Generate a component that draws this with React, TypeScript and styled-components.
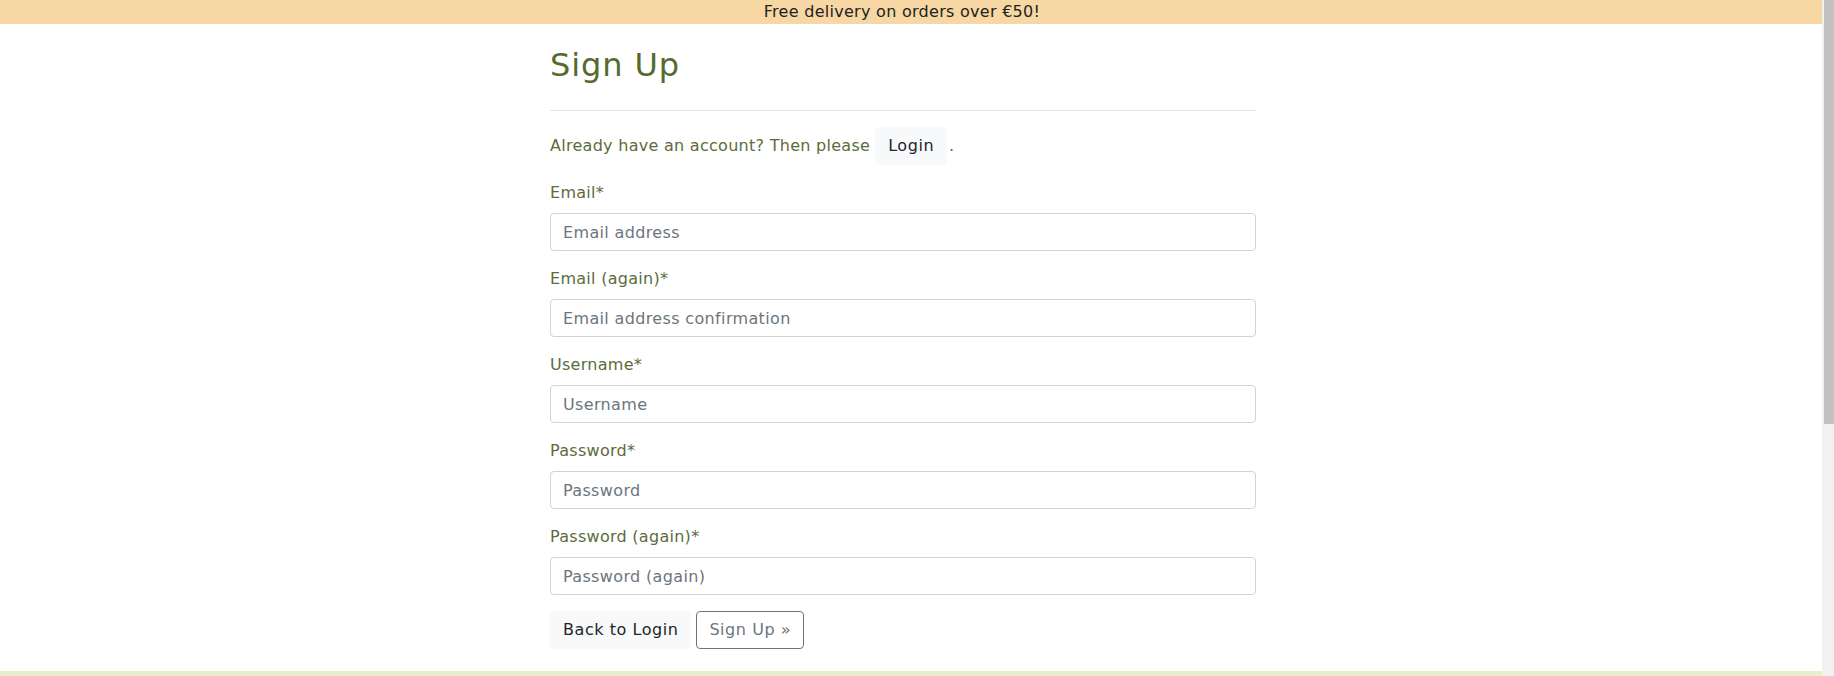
import React from "react";
import styled, { createGlobalStyle } from "styled-components";

const GlobalStyle = createGlobalStyle`
  html, body { margin: 0; padding: 0; overflow: hidden; }
  body {
    background: #ffffff;
    color: #212529;
    font-family: "DejaVu Sans", "Liberation Sans", sans-serif;
    font-size: 16px;
    line-height: 24px;
    letter-spacing: 0.28px;
  }
  * { box-sizing: border-box; }
`;

const Frame = styled.div`
  display: grid;
  grid-template-columns: minmax(0, 1fr) 12px;
  height: 676px;
  overflow: hidden;
`;

const Page = styled.div`
  display: flex;
  flex-direction: column;
  min-height: 1078px;
`;

const ScrollTrack = styled.div`
  background: #f1f1f1;
  padding-left: 2px;
`;

const ScrollThumb = styled.div`
  height: 424px;
  background: #c1c1c1;
`;

const Banner = styled.div`
  background: #f7d8a4;
  height: 24px;
  padding-right: 18px;
  text-align: center;
  color: #222222;
  font-size: 16px;
  line-height: 24px;
`;

const Main = styled.main`
  width: 706px;
  margin-left: calc(50% - 361px);
  padding: 22px 0 22px;
  display: flex;
  flex-direction: column;
`;

const Title = styled.h2`
  margin: 0;
  font-size: 32px;
  line-height: 38px;
  font-weight: 400;
  letter-spacing: 0.9px;
  color: #556b2f;
`;

const Divider = styled.hr`
  margin: 26px 0 16px;
  border: 0;
  border-top: 1px solid #e2e2e2;
  height: 0;
`;

const Intro = styled.p`
  margin: 0 0 16px;
  color: #5a6d3c;
  line-height: 24px;
`;

const Button = styled.button<{ $variant: "light" | "outline" }>`
  display: inline-block;
  font-family: inherit;
  font-size: 16px;
  line-height: 24px;
  letter-spacing: 0.55px;
  padding: 6px 12px;
  border-radius: 4px;
  cursor: pointer;
  vertical-align: middle;
  background: ${(p) => (p.$variant === "light" ? "#f8f9fa" : "transparent")};
  color: ${(p) => (p.$variant === "light" ? "#212529" : "#6c757d")};
  border: 1px solid ${(p) => (p.$variant === "light" ? "#f8f9fa" : "#6c757d")};
`;

const InlineButton = styled(Button)`
  margin: 0 2px 0 5px;
  vertical-align: baseline;
`;

const Field = styled.div`
  display: flex;
  flex-direction: column;
  margin-bottom: 16px;
`;

const Label = styled.label`
  display: block;
  margin-bottom: 8px;
  color: #5a6d3c;
  line-height: 24px;
`;

const Input = styled.input`
  display: block;
  width: 100%;
  height: 38px;
  padding: 6px 12px;
  font-family: inherit;
  font-size: 16px;
  line-height: 24px;
  letter-spacing: 0.35px;
  color: #212529;
  background: #fff;
  border: 1px solid #ced4da;
  border-radius: 4px;
  outline: none;
  &::placeholder { color: #6c757d; opacity: 1; }
`;

const Actions = styled.div`
  display: flex;
  gap: 5px;
`;

const Footer = styled.footer`
  flex: 1;
  background: #e8eecb;
`;

const fields = [
  { label: "Email*", placeholder: "Email address", type: "email" },
  { label: "Email (again)*", placeholder: "Email address confirmation", type: "email" },
  { label: "Username*", placeholder: "Username", type: "text" },
  { label: "Password*", placeholder: "Password", type: "password" },
  { label: "Password (again)*", placeholder: "Password (again)", type: "password" },
];

export default function App() {
  return (
    <>
      <GlobalStyle />
      <Frame>
        <Page>
          <Banner>Free delivery on orders over €50!</Banner>
          <Main>
            <Title>Sign Up</Title>
            <Divider />
            <Intro>
              Already have an account? Then please
              <InlineButton $variant="light">Login</InlineButton>.
            </Intro>
            <form onSubmit={(e) => e.preventDefault()}>
              {fields.map((f, i) => (
                <Field key={f.label}>
                  <Label htmlFor={`f${i}`}>{f.label}</Label>
                  <Input id={`f${i}`} type={f.type} placeholder={f.placeholder} />
                </Field>
              ))}
              <Actions>
                <Button $variant="light" type="button">Back to Login</Button>
                <Button $variant="outline" type="submit">Sign Up »</Button>
              </Actions>
            </form>
          </Main>
          <Footer />
        </Page>
        <ScrollTrack aria-hidden="true">
          <ScrollThumb />
        </ScrollTrack>
      </Frame>
    </>
  );
}
